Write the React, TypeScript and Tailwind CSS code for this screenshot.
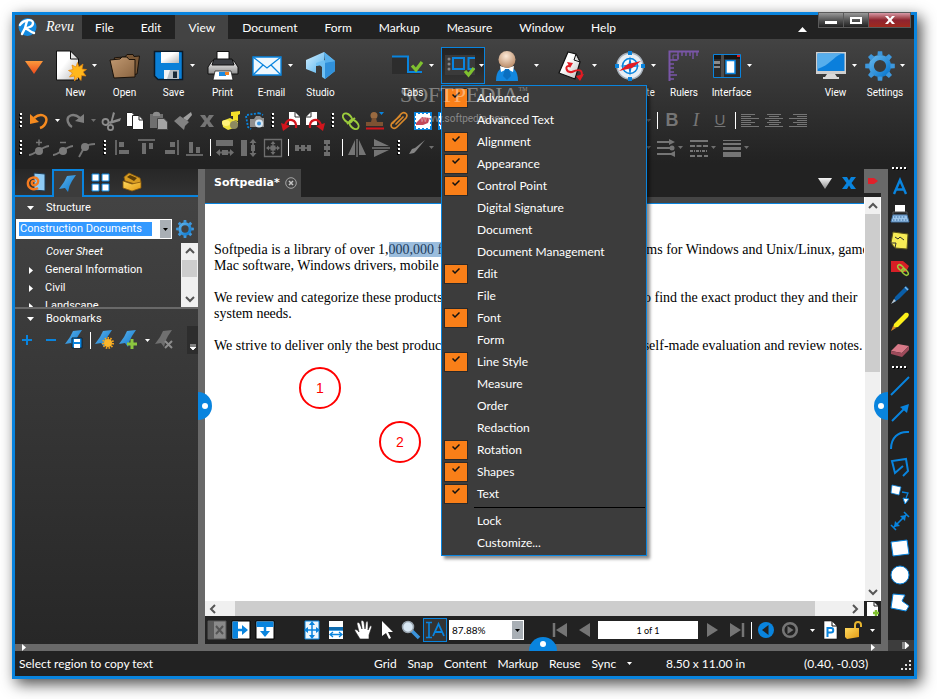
import React, { useState } from "react";
import clsx from "clsx";

interface SvgProps {
  w?: number;
  h?: number;
  className?: string;
  children: React.ReactNode;
}

const BLUE = "#0984de";
const GRAY = "#757575";

const Svg: React.FC<SvgProps> = ({ w = 20, h = 20, className, children }) => (
  <svg
    width={w}
    height={h}
    viewBox={`0 0 ${w} ${h}`}
    fill="none"
    aria-hidden="true"
    className={clsx("shrink-0", className)}
  >
    {children}
  </svg>
);

// Shared gradients, referenced by id from the icons below
const Defs = () => (
  <svg width="0" height="0" className="absolute" aria-hidden="true">
    <defs>
      <linearGradient id="gBlue" x1="0" y1="0" x2="1" y2="1">
        <stop offset="0" stopColor="#5fb2ea" />
        <stop offset="1" stopColor="#0a78cf" />
      </linearGradient>
      <linearGradient id="gSky" x1="0" y1="0" x2="1" y2="1">
        <stop offset="0" stopColor="#d3efff" />
        <stop offset="1" stopColor="#58b4ee" />
      </linearGradient>
      <linearGradient id="gOrange" x1="0" y1="0" x2="0" y2="1">
        <stop offset="0" stopColor="#fb9a3c" />
        <stop offset="1" stopColor="#ee4a1c" />
      </linearGradient>
      <linearGradient id="gWhite" x1="0" y1="0" x2="1" y2="1">
        <stop offset="0.4" stopColor="#ffffff" />
        <stop offset="1" stopColor="#b9b9b9" />
      </linearGradient>
      <linearGradient id="gSilver" x1="0" y1="0" x2="0" y2="1">
        <stop offset="0" stopColor="#f4f4f4" />
        <stop offset="1" stopColor="#8d8d8d" />
      </linearGradient>
      <linearGradient id="gGold" x1="0" y1="0" x2="1" y2="1">
        <stop offset="0" stopColor="#ffd95e" />
        <stop offset="1" stopColor="#e29a13" />
      </linearGradient>
      <radialGradient id="gSkin" cx="0.45" cy="0.3" r="0.7">
        <stop offset="0" stopColor="#fbe9d8" />
        <stop offset="1" stopColor="#b98a66" />
      </radialGradient>
      <linearGradient id="gTan" x1="0" y1="0" x2="1" y2="1">
        <stop offset="0" stopColor="#c29a72" />
        <stop offset="1" stopColor="#8a6440" />
      </linearGradient>
    </defs>
  </svg>
);

const Caret = ({ dim = false }: { dim?: boolean }) => (
  <svg width="5" height="3" viewBox="0 0 5 3" aria-hidden="true" className="shrink-0">
    <path d="M0 0H5L2.500 3Z" fill={dim ? "#6e6e6e" : "#fff"} />
  </svg>
);

const Gear = ({ size = 30 }: { size?: number }) => (
  <svg width={size} height={size} viewBox="0 0 30 30" fill="none" aria-hidden="true">
    <circle cx="15" cy="15" r="8.600" stroke="url(#gBlue)" strokeWidth="5" />
    {[0, 45, 90, 135, 180, 225, 270, 315].map((a) => (
      <path key={a} d="M12.400 4.600 12.800 0.200H17.200L17.600 4.600Z" fill="#3d97dc" transform={`rotate(${a} 15 15)`} />
    ))}
  </svg>
);

const Ribbon = ({ color = "url(#gBlue)" }: { color?: string }) => (
  <path d="M8 1 17 0 13 6 10.500 11 9 17 6 13 0 14 5 7Z" fill={color} />
);

/* ---- large ribbon icons ---- */

const NewIcon = () => (
  <Svg w={32} h={32}>
    <path d="M1.500 1H15.500L23.500 9V30H1.500Z" fill="url(#gWhite)" stroke="#111" />
    <path d="M15.500 1V9H23.500Z" fill="#e6e6e6" stroke="#111" />
    <path
      d="M22.500 12.500 24 17 28 14 27 19 31.500 19.500 28 22 31 26 26.500 25.500 26 30.500 23 27 19.500 31 19.500 26 14.500 27 17.500 23 13.500 20.500 18 19.500 17 15 21 17Z"
      fill="#ffb71b"
      stroke="#e8850c"
      strokeWidth="0.700"
    />
  </Svg>
);

const OpenIcon = () => (
  <Svg w={32} h={32}>
    <path d="M5 8 8 7.500 16 7 18 4.500H24L25 6.500 30.500 6 28 24 16 26Z" fill="#7a5837" stroke="#1a120a" />
    <path d="M1 10 11 9 13 7H18L20 9.500 26 9.500 26 27 5 28Z" fill="url(#gTan)" stroke="#1a120a" />
  </Svg>
);

const SaveIcon = () => (
  <Svg w={32} h={32}>
    <path d="M1.500 1.500H29.500V29.500H5L1.500 26Z" fill="#0a80d8" stroke="#0b1a28" strokeWidth="1.500" />
    <path d="M8 2H26V13H8Z" fill="url(#gWhite)" />
    <path d="M11 20H26V29H11Z" fill="#b9c0c6" />
    <path d="M20 21.500H24V28H20Z" fill="#1a2a38" />
    <path d="M11 20H17L14 29H11Z" fill="#f1f3f5" />
  </Svg>
);

const PrintIcon = () => (
  <Svg w={32} h={32}>
    <path d="M10 1.500H22V10H10Z" fill="#fff" stroke="#111" />
    <path d="M5 11H27L31 17V24H1V17Z" fill="url(#gSilver)" stroke="#111" />
    <path d="M7 9H25L27 15H5Z" fill="#3a3d42" stroke="#111" />
    <path d="M8 21H24L26 30H6Z" fill="#fff" stroke="#222" strokeWidth="0.800" />
    <path d="M12 22H19V26H12Z" fill="#1d8ae0" />
    <path d="M18 22H22V25H18Z" fill="#f58220" />
  </Svg>
);

const MailIcon = () => (
  <Svg w={32} h={32}>
    <path d="M2 7H30V25H2Z" fill="#eef7fd" stroke={BLUE} strokeWidth="1.400" />
    <path d="M2 7 16 18 30 7M2 25 12 15M30 25 20 15" stroke={BLUE} strokeWidth="1.300" />
  </Svg>
);

const StudioIcon = () => (
  <Svg w={32} h={32}>
    <path d="M1 10 19 2V13L11 16V23L1 19Z" fill="url(#gSky)" />
    <path d="M19 2 30 11V21L20 29 17 27V17L15 15.500 11 16V13L20 10Z" fill="#6fc0f2" />
    <path d="M20 12 30 11V21L20 29Z" fill="#3191db" />
    <path d="M19 2 30 11 20 13Z" fill="#58b0ec" />
  </Svg>
);

const TabsIcon = () => (
  <Svg w={32} h={32}>
    <path d="M0 7H16V22H28V24H0Z" fill="#2d2d2d" />
    <path d="M0 6.500H16V22H30" stroke={BLUE} strokeWidth="2" />
    <path d="M20 15.500 24 20 30 12" stroke="#7fc12f" strokeWidth="3.200" />
  </Svg>
);

const ToolbarsIcon = () => (
  <Svg w={32} h={32}>
    <path d="M1 5H31V25H1Z" fill="#3a3a3a" />
    <circle cx="5" cy="9" r="1.500" fill="#858585" />
    <circle cx="5" cy="14" r="1.500" fill="#858585" />
    <circle cx="5" cy="19" r="1.500" fill="#858585" />
    <path d="M9 8H20V19H9ZM31 8H24.500V19H31" stroke={BLUE} strokeWidth="2" />
    <path d="M21 21 24.500 25 30 18" stroke="#7fc12f" strokeWidth="3.200" />
  </Svg>
);

const PersonIcon = () => (
  <Svg w={26} h={32}>
    <path d="M2 31C2 20 7 17 13 17S24 20 24 31Z" fill="#1287df" />
    <path d="M6 16 13 18 20 16 19 22 13 19 7 22Z" fill="#fff" />
    <path d="M11 19H15L17 26 13 30 9 26Z" fill="#0a6fc0" />
    <circle cx="13" cy="9.500" r="8.500" fill="url(#gSkin)" />
  </Svg>
);

const DocArrowsIcon = () => (
  <Svg w={30} h={32}>
    <path d="M11 2 19 4 23 12 18 29 2 23Z" fill="url(#gWhite)" stroke="#111" strokeWidth="1.200" />
    <path d="M19 4 17 10 23 12Z" fill="#ddd" stroke="#111" />
    <path d="M13 16C7 15 9 23 15 22C21 19 27 19 24 27" stroke="#e31b23" strokeWidth="2" />
    <path d="M10 12 16 13 13 18ZM19 26 27 24 23 31Z" fill="#e31b23" />
  </Svg>
);

const CompassIcon = () => (
  <Svg w={32} h={32}>
    <circle cx="16" cy="16" r="13" fill="#e8eef4" stroke="#a8b2bc" strokeWidth="1.500" />
    <path d="M14 1H18V5H14ZM14 27H18V31H14ZM1 14H5V18H1ZM27 14H31V18H27Z" fill={BLUE} />
    <circle cx="16" cy="16" r="7.500" fill="#f4f7fa" stroke={BLUE} strokeWidth="1.600" />
    <path d="M16 6 17.500 14.500 26 16 17.500 17.500 16 26 14.500 17.500 6 16 14.500 14.500Z" fill={BLUE} />
    <path d="M5 21 14 14 27 11 18 18Z" fill="#e31b23" />
  </Svg>
);

const RulersIcon = () => (
  <Svg w={32} h={32}>
    <path d="M1.500 31V1.500H31" stroke="#7a56a8" strokeWidth="2" />
    <path
      d="M10 2V9M14 2V6M18 2V6M22 2V6M25 2V9M29 2V6M2 10H9M2 14H6M2 18H6M2 22H6M2 25H9M2 29H6"
      stroke="#7a56a8"
      strokeWidth="1.400"
    />
    <path d="M5 5H10V10H5Z" stroke="#7a56a8" />
  </Svg>
);

const InterfaceIcon = () => (
  <Svg w={30} h={32}>
    <path d="M1.500 4.500H28.500V27.500H1.500Z" fill="#2a2a2a" stroke={BLUE} />
    <path d="M2 5H28V9H2Z" fill="#151515" />
    <path d="M2 11H8V14H2ZM2 16H8V18H2Z" fill="#8b8b8b" />
    <path d="M9 5H12V27H9Z" fill="#4d4d4d" />
    <path d="M14 10.500H23V23.500H14Z" fill="#fff" stroke={BLUE} strokeWidth="1.500" />
    <path d="M25 5H28V7H25Z" fill="#e31b23" />
  </Svg>
);

const MonitorIcon = () => (
  <Svg w={32} h={32}>
    <path d="M1 2H31V24H1Z" fill="#cfcfcf" />
    <path d="M2.500 3.500H29.500V21H2.500Z" fill="#0b7fdc" />
    <path d="M2.500 3.500H27C18 7 15 15 2.500 19Z" fill="#57aeec" />
    <path d="M12 24H20L22 27H10ZM8 27H24V29H8Z" fill="#d9d9d9" />
  </Svg>
);

/* ---- small toolbar icons ---- */

const UndoIcon = () => (
  <Svg>
    <path d="M5 7C12 1 19 5 17 11C16 14 14 16 11 17" stroke="#f68b1f" strokeWidth="2.400" />
    <path d="M1 3V13L10 11Z" fill="#f68b1f" />
  </Svg>
);

const RedoIcon = () => (
  <Svg>
    <path d="M15 7C8 1 1 5 3 11C4 14 5 15 7 16" stroke="#7e7e7e" strokeWidth="2.400" />
    <path d="M19 3V12L10 10Z" fill="#7e7e7e" />
  </Svg>
);

const CutIcon = () => (
  <Svg>
    <path d="M12 1 14 2 11 12 9 13ZM20 7 19 10 9 13 7 11Z" fill="#8c8c8c" />
    <circle cx="4.500" cy="11" r="3" stroke="#8c8c8c" strokeWidth="1.800" />
    <circle cx="9.500" cy="16.500" r="2.600" stroke="#8c8c8c" strokeWidth="1.800" />
  </Svg>
);

const CopyIcon = () => (
  <Svg>
    <path d="M1.500 1.500H7L10.500 5V15.500H1.500Z" fill="#fff" stroke="#222" />
    <path d="M7.500 4.500H14L18.500 9V18.500H7.500Z" fill="#fff" stroke="#222" />
    <path d="M14 4.500V9H18.500" stroke="#222" />
  </Svg>
);

const PasteIcon = () => (
  <Svg>
    <path d="M1 3H14V17H1Z" fill="#6f6f6f" />
    <path d="M4 3C4 0 11 0 11 3V5H4Z" fill="#8c8c8c" />
    <path d="M8.500 7.500H15L18.500 11V18.500H8.500Z" fill="#a4a4a4" stroke="#444" />
  </Svg>
);

const PainterIcon = () => (
  <Svg>
    <path d="M18 1 19 4 14 10 10 7Z" fill="#a0a0a0" />
    <path d="M7 5 16 11 12 15 11 19 1 10Z" fill="#828282" />
  </Svg>
);

const XIcon = ({ color = GRAY }: { color?: string }) => (
  <Svg w={18} h={18}>
    <path d="M2 3H7L9 6.500 11 3H16L11.500 9 16 15H11L9 11.500 7 15H2L6.500 9Z" fill={color} />
  </Svg>
);

const HornIcon = () => (
  <Svg>
    <path d="M10 1 19 0 19 3 17 4 17 10 12 9 12 5 10 5Z" fill="#f4e02a" />
    <path d="M1 10 9 7 17 11 16 16 7 19 2 16Z" fill="#ece13c" />
    <ellipse cx="13" cy="14" rx="4" ry="4" fill="#8d8a60" />
    <ellipse cx="5" cy="12" rx="4" ry="3" fill="#fff37a" />
  </Svg>
);

const CameraIcon = () => (
  <Svg>
    <path d="M2 4 14 2M1 5 3 16 6 18M14 2 18 4" stroke={BLUE} strokeWidth="1.800" strokeDasharray="2 1.500" />
    <path d="M5 8H9L11 5H15L17 7H19V16H5Z" fill="#8f8f8f" />
    <circle cx="14" cy="12.500" r="4" fill="#d9e7f2" />
    <circle cx="14" cy="12.500" r="2" fill="#3b93db" />
  </Svg>
);

const RotateIcon = ({ flip = false }: { flip?: boolean }) => (
  <Svg className={flip ? "-scale-x-100" : ""}>
    <path d="M8 1H14L19 6V14H8Z" fill="#fff" />
    <path d="M14 1V6H19" stroke="#333" />
    <path d="M15 17C16 8 7 6 4 14" stroke="#d2151d" strokeWidth="2.200" />
    <path d="M0 12 9 15 2 20Z" fill="#d2151d" />
  </Svg>
);

const LinkIcon = () => (
  <Svg>
    <ellipse cx="6.500" cy="7" rx="5.500" ry="3.500" transform="rotate(45 6.500 7)" stroke="#9ccc3c" strokeWidth="2" />
    <ellipse cx="13" cy="13.500" rx="5.500" ry="3.500" transform="rotate(45 13 13.500)" stroke="#9ccc3c" strokeWidth="2" />
    <path d="M6 13 14 7" stroke="#9ccc3c" strokeWidth="2" />
  </Svg>
);

const StampIcon = () => (
  <Svg>
    <circle cx="9" cy="4.500" r="3.500" fill="#9a6a40" />
    <path d="M7 7H11L12 11H18V15H1V11H6Z" fill="#7d5232" />
    <path d="M1 17.500H19" stroke="#d2151d" strokeWidth="2" />
    <path d="M14 1H19L16.500 4Z" fill={BLUE} />
  </Svg>
);

const ClipIcon = () => (
  <Svg>
    <path
      d="M4 12 12 3C15 0 20 3 17 7L8 16C5 19 0 16 3 12L11 5M7 13 14 6"
      stroke="#d9892b"
      strokeWidth="1.700"
      strokeLinecap="round"
    />
  </Svg>
);

const EraseImageIcon = () => (
  <Svg>
    <path d="M1 1H19V19H1Z" fill={BLUE} />
    <path d="M3 3H17V17H3Z" fill="#fff" stroke="#fff" strokeWidth="2" strokeDasharray="2 2" />
    <path d="M3 12 9 6 17 7 15 12 10 14 3 14Z" fill="#c4485a" />
  </Svg>
);

const TextAlignIcon = ({ align }: { align: "left" | "center" | "right" }) => (
  <Svg w={18} h={16}>
    {[0, 1, 2, 3, 4, 5, 6].map((i) => {
      const len = i % 2 ? 10 : i % 4 ? 18 : 14;
      const x = align === "left" ? 0 : align === "right" ? 18 - len : (18 - len) / 2;
      return <path key={i} d={`M${x} ${i * 2 + 1.5}h${len}`} stroke={GRAY} />;
    })}
  </Svg>
);

const PointIcon = ({ sign }: { sign?: "+" | "-" }) => (
  <Svg>
    <path d={sign ? "M0 17C5 17 12 9 20 8" : "M2 19C6 13 6 6 18 6"} stroke={GRAY} strokeWidth="2" />
    <circle cx={sign ? 10 : 8} cy={sign ? 13 : 9} r="4" fill="#7b7b7b" />
    {sign && <path d={sign === "+" ? "M7 4.500H13M10 1.500V7.500" : "M7 4.500H13"} stroke={GRAY} strokeWidth="1.500" />}
  </Svg>
);

const AlignIcon = ({ d, line }: { d: string; line: string }) => (
  <Svg>
    <path d={line} stroke="#646464" strokeWidth="2" />
    <path d={d} fill="#6e6e6e" />
  </Svg>
);

const Grip = () => (
  <div className="flex w-3 shrink-0 justify-center">
    <Svg w={4} h={16}>
      {[1, 5, 9, 13].map((y) => (
        <g key={y}>
          <path d={`M0 ${y}h2v2h-2z`} fill="#000" />
          <path d={`M1 ${y - 1}h2v2h-2z`} fill="#fff" />
        </g>
      ))}
    </Svg>
  </div>
);

const HGrip = () => (
  <Svg w={16} h={5}>
    {[1, 5, 9, 13].map((x) => (
      <g key={x}>
        <path d={`M${x} 2h2v2h-2z`} fill="#000" />
        <path d={`M${x - 1} 1h2v2h-2z`} fill="#fff" />
      </g>
    ))}
  </Svg>
);

const Sep = () => (
  <div className="flex w-[6px] shrink-0 justify-center">
    <div className="h-[17px] w-px bg-white" />
  </div>
);

interface SlotProps {
  label: string;
  className?: string;
  children: React.ReactNode;
}

const Slot: React.FC<SlotProps> = ({ label, className, children }) => (
  <button
    type="button"
    aria-label={label}
    className={clsx("flex h-6 w-6 shrink-0 items-center justify-center", className)}
  >
    {children}
  </button>
);

const CaretSlot = ({ dim = false, className = "w-3 justify-center" }: { dim?: boolean; className?: string }) => (
  <div className={clsx("flex shrink-0 items-center", className)}>
    <Caret dim={dim} />
  </div>
);

/* ---- menu bar ---- */

const MENUS = ["File", "Edit", "View", "Document", "Form", "Markup", "Measure", "Window", "Help"];

const MenuBar = () => (
  <div className="relative flex h-6 shrink-0 bg-[#222]">
    <div className="flex w-[67px] shrink-0 items-center gap-[9px] bg-[#434343] pl-[3px]">
      <Svg w={19} h={20}>
        <circle cx="9.500" cy="10" r="9" fill="#128be2" />
        <path
          d="M2 8C5 3 15 1 15 6C15 10 9 11 7 11C10 12 12 15 16 16M9 4C8 9 6 14 4 17"
          stroke="#fff"
          strokeWidth="2.400"
          strokeLinecap="round"
        />
      </Svg>
      <span className="font-['Liberation_Serif',serif] text-[14px] leading-6 text-white italic">Revu</span>
    </div>
    <nav className="flex gap-px">
      {MENUS.map((m) => (
        <button
          key={m}
          type="button"
          className={clsx("px-[13px] pt-px text-[12px] leading-6 text-white", m === "View" && "bg-[#434343]")}
        >
          {m}
        </button>
      ))}
    </nav>
    <div className="flex-1" />
    <button type="button" aria-label="Collapse ribbon" className="mr-[107px] flex items-center pt-1">
      <Svg w={9} h={5}>
        <path d="M0 5 4.500 0 9 5Z" fill="#fff" />
      </Svg>
    </button>
    <div className="absolute -top-[3px] right-[3px] flex h-4 border border-[#5a5a5a]">
      <button
        type="button"
        aria-label="Minimize"
        className="flex w-[25px] items-end justify-center border-r border-[#5a5a5a] bg-linear-to-b from-[#9a9a9a] via-[#555] via-50% to-[#222] pb-[3px]"
      >
        <span className="h-[3px] w-3 bg-white" />
      </button>
      <button
        type="button"
        aria-label="Maximize"
        className="flex w-[25px] items-center justify-center border-r border-[#5a5a5a] bg-linear-to-b from-[#9a9a9a] via-[#555] via-50% to-[#222]"
      >
        <span className="h-[7px] w-3 border-2 border-white" />
      </button>
      <button
        type="button"
        aria-label="Close"
        className="flex w-[41px] items-center justify-center bg-linear-to-b from-[#d79aa8] via-[#8e2430] via-50% to-[#a02a1c]"
      >
        <Svg w={12} h={10}>
          <path d="M1 1H4L6 3.500 8 1H11L7.500 5 11 9H8L6 6.500 4 9H1L4.500 5Z" fill="#fff" />
        </Svg>
      </button>
    </div>
  </div>
);

/* ---- toolbars drop-down ---- */

interface MenuEntry {
  label: string;
  checked?: boolean;
}

const TOOLBARS: MenuEntry[] = [
  { label: "Advanced", checked: true },
  { label: "Advanced Text" },
  { label: "Alignment", checked: true },
  { label: "Appearance", checked: true },
  { label: "Control Point", checked: true },
  { label: "Digital Signature" },
  { label: "Document" },
  { label: "Document Management" },
  { label: "Edit", checked: true },
  { label: "File" },
  { label: "Font", checked: true },
  { label: "Form" },
  { label: "Line Style", checked: true },
  { label: "Measure" },
  { label: "Order" },
  { label: "Redaction" },
  { label: "Rotation", checked: true },
  { label: "Shapes", checked: true },
  { label: "Text", checked: true },
];

const ToolbarsMenu = () => {
  const [items, setItems] = useState<MenuEntry[]>(TOOLBARS);

  const toggle = (label: string) => {
    setItems((prev) => prev.map((i) => (i.label === label ? { ...i, checked: !i.checked } : i)));
  };

  return (
    <div
      role="menu"
      className="absolute top-[38px] left-0 z-20 w-[206px] border border-[#0984de] bg-[#3c3c3c] px-px py-px font-['Lato','Open_Sans',sans-serif] text-[12px] text-white shadow-[3px_3px_3px_rgba(0,0,0,0.45)]"
    >
      {items.map((item) => (
        <button
          key={item.label}
          type="button"
          role="menuitemcheckbox"
          aria-checked={!!item.checked}
          onClick={() => toggle(item.label)}
          className="flex h-[22px] w-full items-center gap-[9px] pl-px text-left"
        >
          <span
            className={clsx(
              "flex h-5 w-6 shrink-0 justify-center border pt-[2px]",
              item.checked ? "border-[#2a2a2a] bg-[#f97f18]" : "border-transparent"
            )}
          >
            {item.checked && (
              <Svg w={8} h={8}>
                <path d="M0.500 3.500 3 6 7.500 1.500" stroke="#111" strokeWidth="1.500" />
              </Svg>
            )}
          </span>
          {item.label}
        </button>
      ))}
      <div className="my-[2px] ml-[31px] h-px bg-black" />
      {["Lock", "Customize..."].map((label) => (
        <button key={label} type="button" role="menuitem" className="flex h-[22px] w-full items-center pl-[34px]">
          {label}
        </button>
      ))}
    </div>
  );
};

const Watermark = () => (
  <div className="pointer-events-none absolute top-[36px] -left-[41px] z-30 text-white/40">
    <div className="flex font-['Liberation_Serif',serif] text-[22px] leading-6">
      SOFTPEDIA<span className="text-[6px] leading-3">TM</span>
    </div>
    <div className="pl-5 text-[10px] leading-6">www.softpedia.com</div>
  </div>
);

/* ---- ribbon ---- */

interface RibbonItemProps {
  label: string;
  icon: React.ReactNode;
  caret?: boolean;
  width?: string;
}

const RibbonItem: React.FC<RibbonItemProps> = ({ label, icon, caret, width = "w-[49px]" }) => (
  <button type="button" className={clsx("flex shrink-0 flex-col items-center", width)}>
    <span className="flex h-[37px] items-center gap-[5px]">
      {icon}
      {caret && <Caret />}
    </span>
    <span className="text-[10px] leading-[18px] text-white">{label}</span>
  </button>
);

const RibbonRow = () => (
  <div className="flex h-[68px] pt-2 pr-1 pl-px">
    <button type="button" aria-label="Profile menu" className="flex h-[41px] w-[35px] shrink-0 items-center justify-center">
      <Svg w={18} h={13}>
        <path d="M0 0H18L9 13Z" fill="url(#gOrange)" />
      </Svg>
    </button>
    <RibbonItem label="New" icon={<NewIcon />} caret />
    <RibbonItem label="Open" icon={<OpenIcon />} />
    <RibbonItem label="Save" icon={<SaveIcon />} caret />
    <RibbonItem label="Print" icon={<PrintIcon />} />
    <RibbonItem label="E-mail" icon={<MailIcon />} caret />
    <RibbonItem label="Studio" icon={<StudioIcon />} />
    <div className="w-[43px] shrink-0" />
    <RibbonItem label="Tabs" icon={<TabsIcon />} caret />
    <div className="relative w-[52px] shrink-0 px-1">
      <button
        type="button"
        aria-label="Toolbars"
        aria-haspopup="menu"
        className="flex h-[37px] w-full items-center gap-[3px] border border-[#0984de] bg-linear-to-b from-[#222] to-[#333] pl-[2px]"
      >
        <ToolbarsIcon />
        <Caret />
      </button>
      <div className="relative -mt-[37px]">
        <ToolbarsMenu />
        <Watermark />
      </div>
    </div>
    <RibbonItem label="Profiles" icon={<><PersonIcon /><span className="w-1" /></>} caret width="w-[55px]" />
    <RibbonItem label="Links" icon={<DocArrowsIcon />} caret width="w-[66px]" />
    <RibbonItem label="Navigate" icon={<CompassIcon />} caret width="w-[50px]" />
    <RibbonItem label="Rulers" icon={<RulersIcon />} width="w-[48px]" />
    <RibbonItem label="Interface" icon={<InterfaceIcon />} caret width="w-[47px]" />
    <div className="flex-1" />
    <RibbonItem label="View" icon={<MonitorIcon />} caret />
    <RibbonItem label="Settings" icon={<Gear />} caret width="w-[50px]" />
  </div>
);

const EditRow = () => (
  <div className="flex h-[27px] items-center">
    <Grip />
    <Slot label="Undo"><UndoIcon /></Slot>
    <CaretSlot />
    <Slot label="Redo"><RedoIcon /></Slot>
    <CaretSlot dim />
    <Slot label="Cut"><CutIcon /></Slot>
    <Slot label="Copy"><CopyIcon /></Slot>
    <Slot label="Paste"><PasteIcon /></Slot>
    <Slot label="Format painter"><PainterIcon /></Slot>
    <Slot label="Delete"><XIcon /></Slot>
    <Slot label="Flatten"><HornIcon /></Slot>
    <Slot label="Snapshot"><CameraIcon /></Slot>
    <Grip />
    <Slot label="Rotate left"><RotateIcon /></Slot>
    <Slot label="Rotate right"><RotateIcon flip /></Slot>
    <Grip />
    <Slot label="Hyperlink"><LinkIcon /></Slot>
    <Slot label="Stamp"><StampIcon /></Slot>
    <Slot label="Attach"><ClipIcon /></Slot>
    <Slot label="Erase content"><EraseImageIcon /></Slot>
    <Slot label="Cut content"><EraseImageIcon /></Slot>
    <div className="w-[183px] shrink-0" />
    <CaretSlot dim />
    <Sep />
    <Slot label="Bold" className="font-['Liberation_Sans',sans-serif] text-[18px] font-bold text-[#757575]">B</Slot>
    <Slot label="Italic" className="font-['Liberation_Serif',serif] text-[19px] text-[#757575] italic">I</Slot>
    <Slot label="Underline" className="font-['Liberation_Sans',sans-serif] text-[15px] text-[#757575] underline">U</Slot>
    <Sep />
    <Slot label="Align left"><TextAlignIcon align="left" /></Slot>
    <Slot label="Align center"><TextAlignIcon align="center" /></Slot>
    <Slot label="Align right"><TextAlignIcon align="right" /></Slot>
  </div>
);

const AlignRow = () => (
  <div className="flex h-[27px] items-center">
    <Grip />
    <Slot label="Add control point"><PointIcon sign="+" /></Slot>
    <Slot label="Subtract control point"><PointIcon sign="-" /></Slot>
    <Slot label="Convert to arc"><PointIcon /></Slot>
    <Grip />
    <Slot label="Align objects left"><AlignIcon line="M3 2V17" d="M6 4H11V9H6ZM6 12H16V16H6Z" /></Slot>
    <Slot label="Align objects top"><AlignIcon line="M1 2H18" d="M5 5H9V16H5ZM12 5H16V11H12Z" /></Slot>
    <Slot label="Align objects right"><AlignIcon line="M17 2V17" d="M9 4H14V9H9ZM4 12H14V16H4Z" /></Slot>
    <Slot label="Align objects bottom"><AlignIcon line="M1 17H18" d="M4 4H8V15H4ZM11 9H15V15H11Z" /></Slot>
    <Sep />
    <Slot label="Same width"><AlignIcon line="M5 14.500H15" d="M1 2H18V8H1ZM1 14.500 5 11V18ZM19 14.500 15 11V18ZM7 12H13V17H7Z" /></Slot>
    <Slot label="Same height"><AlignIcon line="M14 5V15" d="M2 2H8V18H2ZM14 1 17.500 5H10.500ZM14 19 17.500 15H10.500ZM12 7H16V13H12Z" /></Slot>
    <Slot label="Same size">
      <Svg>
        <path d="M1.500 1.500H18.500V18.500H1.500ZM10 4V16M4 10H16" stroke="#6e6e6e" strokeWidth="1.300" />
        <path d="M10 3 12.500 6H7.500ZM10 17 12.500 14H7.500ZM3 10 6 7.500V12.500ZM17 10 14 7.500V12.500ZM7.500 7.500H12.500V12.500H7.500Z" fill="#6e6e6e" />
      </Svg>
    </Slot>
    <Sep />
    <Slot label="Distribute horizontally"><AlignIcon line="M2 10H18" d="M2 7H6V13H2ZM8 7H12V13H8ZM14 7H18V13H14Z" /></Slot>
    <Slot label="Distribute vertically"><AlignIcon line="M10 2V18" d="M7 2H13V6H7ZM7 8H13V12H7ZM7 14H13V18H7Z" /></Slot>
    <Sep />
    <Slot label="Flip horizontal">
      <Svg>
        <path d="M8 2V17H1ZM12 2V17H19Z" fill={GRAY} />
        <path d="M10 1V19" stroke="#999" />
      </Svg>
    </Slot>
    <Slot label="Flip vertical">
      <Svg>
        <path d="M3 1 18 8H3ZM3 19 18 12H3Z" fill={GRAY} />
        <path d="M1 10H19" stroke="#999" />
      </Svg>
    </Slot>
    <Grip />
    <Slot label="Brush">
      <Svg>
        <path d="M2 16 5 11 8 10 18 2 9 13 7 15Z" fill="#858585" />
      </Svg>
    </Slot>
    <CaretSlot dim className="w-[9px] justify-start" />
    <div className="w-[204px] shrink-0" />
    <CaretSlot dim />
    <Slot label="Line ends">
      <Svg>
        <path d="M1 4H15M1 10H15M1 16H15" stroke={GRAY} strokeWidth="2" />
        <path d="M13 1 19 4 13 7ZM19 19 13 16 19 13" fill={GRAY} />
        <circle cx="16" cy="10" r="2.500" fill={GRAY} />
      </Svg>
    </Slot>
    <CaretSlot dim className="w-[9px] justify-start" />
    <Slot label="Line style">
      <Svg>
        <path d="M1 3H19" stroke={GRAY} strokeWidth="2" />
        <path d="M1 8H19" stroke={GRAY} strokeWidth="2" strokeDasharray="5 1.500" />
        <path d="M1 13H19" stroke={GRAY} strokeWidth="2" strokeDasharray="3 1 1 1" />
        <path d="M1 18H19" stroke={GRAY} strokeWidth="2" strokeDasharray="5 2" />
      </Svg>
    </Slot>
    <CaretSlot dim className="w-[9px] justify-start" />
    <Slot label="Line width">
      <Svg>
        <path d="M1 2H19V3H1ZM1 5H19V7H1ZM1 9H19V12H1ZM1 14H19V19H1Z" fill={GRAY} />
      </Svg>
    </Slot>
    <CaretSlot dim className="w-[9px] justify-start" />
  </div>
);

/* ---- left panel ---- */

const PanelHeader = ({ title }: { title: string }) => (
  <button type="button" className="flex h-5 w-full shrink-0 items-center gap-3 pl-3 text-[11px] text-white">
    <Svg w={7} h={4}>
      <path d="M0 0H7L3.500 4Z" fill="#fff" />
    </Svg>
    {title}
  </button>
);

const Chevron = ({ d }: { d: string }) => (
  <Svg w={10} h={10}>
    <path d={d} stroke="#555" strokeWidth="2" />
  </Svg>
);

const UP = "M1 7 5 3 9 7";
const DOWN = "M1 3 5 7 9 3";
const LEFT = "M7 1 3 5 7 9";
const RIGHT = "M3 1 7 5 3 9";

const LeftPanel = () => (
  <aside className="flex w-[183px] shrink-0 flex-col bg-linear-to-b from-[#454545] to-[#272727]">
    <div className="mb-px flex h-7 shrink-0 bg-linear-to-b from-[#272727] to-[#333]">
      <div className="flex w-[37px] items-center justify-center border-b-2 border-[#0984de] pl-1">
        <Svg>
          <path d="M8 1 19 2V19L8 18Z" fill="#8ecbf5" stroke="#1d3b55" />
          <path
            d="M9 10C8 8 5 9 6 12C8 15 13 12 12 8C10 4 3 5 2 10C1 16 7 19 12 16"
            stroke="#f47b20"
            strokeWidth="2.400"
          />
        </Svg>
      </div>
      <div className="flex w-8 items-center justify-center border-2 border-b-0 border-[#0984de] bg-[#3c3c3c]">
        <Svg w={18} h={18}><Ribbon /></Svg>
      </div>
      <div className="flex flex-1 items-center gap-3 border-b-2 border-[#0984de] pl-[6px]">
        <Svg>
          <path d="M2 2H9V9H2ZM12 2H19V9H12ZM2 12H9V19H2ZM12 12H19V19H12Z" fill="#fff" stroke={BLUE} />
        </Svg>
        <Svg>
          <path d="M2 5 7 1 18 6 19 10 13 12 3 9Z" fill="#d79c22" stroke="#8a5a0c" strokeWidth="0.800" />
          <path d="M5 5 8 3 15 6 12 9Z" fill="#5a3c08" />
          <path d="M1 9 10 12 19 10 19 16 10 19 1 16Z" fill="url(#gGold)" stroke="#8a5a0c" strokeWidth="0.800" />
        </Svg>
      </div>
    </div>
    <PanelHeader title="Structure" />
    <div className="flex items-center gap-1 pt-px pl-px">
      <button
        type="button"
        aria-haspopup="listbox"
        className="flex h-5 w-[156px] items-center justify-between border border-white bg-white pl-[2px]"
      >
        <span className="w-[133px] bg-[#3399ff] pl-px text-left text-[11px] leading-[14px] text-white">
          Construction Documents
        </span>
        <span className="flex h-full w-[11px] items-center justify-center bg-[#a9afb5]">
          <Svg w={5} h={3}>
            <path d="M0 0H5L2.500 3Z" fill="#000" />
          </Svg>
        </span>
      </button>
      <button type="button" aria-label="Structure settings">
        <Gear size={18} />
      </button>
    </div>
    <div className="flex h-[70px] shrink-0 overflow-hidden border-b-2 border-[#696969] pt-1">
      <ul className="flex-1 text-[11px] leading-[18px] text-white">
        <li className="pl-[31px] italic">Cover Sheet</li>
        {["General Information", "Civil", "Landscape"].map((t) => (
          <li key={t} className="flex items-center gap-3 pl-[14px]">
            <Svg w={4} h={7}>
              <path d="M0 0 4 3.500 0 7Z" fill="#fff" />
            </Svg>
            {t}
          </li>
        ))}
      </ul>
      <div className="flex w-[17px] flex-col items-center justify-between bg-[#f0f0f0] py-[3px]">
        <Chevron d={UP} />
        <div className="mt-1 h-[17px] w-[15px] bg-[#cdcdcd]" />
        <div className="flex-1" />
        <Chevron d={DOWN} />
      </div>
    </div>
    <PanelHeader title="Bookmarks" />
    <div className="flex h-[22px] items-center">
      <Slot label="Add">
        <Svg w={10} h={10}><path d="M5 0V10M0 5H10" stroke={BLUE} strokeWidth="2" /></Svg>
      </Slot>
      <Slot label="Remove">
        <Svg w={10} h={10}><path d="M0 5H10" stroke={BLUE} strokeWidth="2" /></Svg>
      </Slot>
      <Slot label="Save bookmarks">
        <Svg>
          <Ribbon />
          <path d="M7 8H17V18H7Z" fill={BLUE} stroke="#123" />
          <path d="M9 9H15V12H9ZM9 14H15V18H9Z" fill="#fff" />
        </Svg>
      </Slot>
      <Sep />
      <Slot label="New bookmark">
        <Svg>
          <Ribbon />
          <circle cx="13" cy="13" r="5" stroke="#f7a51b" strokeWidth="2" strokeDasharray="1.500 1.300" />
          <circle cx="13" cy="13" r="4" fill="#fbb62a" />
        </Svg>
      </Slot>
      <Slot label="Add child bookmark">
        <Svg>
          <Ribbon />
          <path d="M13 9V19M8 14H18" stroke="#8cc63f" strokeWidth="3" />
        </Svg>
      </Slot>
      <CaretSlot />
      <Slot label="Delete bookmark">
        <Svg>
          <Ribbon color="#6f6f6f" />
          <path d="M10 11 17 18M17 11 10 18" stroke="#8d8d8d" strokeWidth="2" />
        </Svg>
      </Slot>
      <div className="flex-1" />
      <div className="flex h-7 w-[11px] items-end justify-center bg-[#2d2d2d] pb-1">
        <Svg w={6} h={6}>
          <path d="M0 1H6M0 3H6L3 6Z" fill="#fff" stroke="#fff" strokeWidth="0.800" />
        </Svg>
      </div>
    </div>
  </aside>
);

/* ---- document ---- */

const Pin = ({ n, className }: { n: number; className: string }) => (
  <div
    className={clsx(
      "absolute flex h-[42px] w-[42px] items-center justify-center rounded-full border-2 border-[#f00] font-['Liberation_Sans',sans-serif] text-[14px] text-[#f00]",
      className
    )}
  >
    {n}
  </div>
);

const Page = () => (
  <div className="relative min-h-0 flex-1 overflow-hidden bg-white pt-[38px] pl-[9px] font-['Liberation_Serif',serif] text-[14px] leading-4 whitespace-nowrap text-black">
    <p className="mb-4">
      Softpedia is a library of over 1,<span className="bg-[#9bbddd] text-[#1e3c5c]">000,000 free and</span>{" "}
      free-to-try&nbsp;&nbsp;&nbsp; software programs for Windows and Unix/Linux, games,
      <br />
      Mac software, Windows drivers, mobile devices and IT-related articles.
    </p>
    <p className="mb-4">
      We review and categorize these products in order to allow&nbsp;&nbsp;&nbsp; the visitor/user to find the exact
      product they and their
      <br />
      system needs.
    </p>
    <p>
      We strive to deliver only the best products to the visitor/user&nbsp;&nbsp;&nbsp; together with self-made
      evaluation and review notes.
    </p>
    <Pin n={1} className="top-[163px] left-[94px]" />
    <Pin n={2} className="top-[217px] left-[174px]" />
  </div>
);

const NavBar = () => (
  <div className="flex h-7 shrink-0 items-center bg-[#222]">
    <Slot label="Close split">
      <Svg>
        <path d="M1 1H19V19H1Z" fill="#8a8a8a" stroke="#555" />
        <path d="M1 1H7V19H1Z" fill="#5b5b5b" />
        <path d="M9 6 16 14M16 6 9 14" stroke="#555" strokeWidth="2" />
      </Svg>
    </Slot>
    <Slot label="Split vertical">
      <Svg>
        <path d="M1 1H19V19H1Z" fill="#fff" stroke="#000" />
        <path d="M1.500 1.500H7V18.500H1.500Z" fill={BLUE} />
        <path d="M6 10H13" stroke={BLUE} strokeWidth="2.500" />
        <path d="M11 5 17 10 11 15Z" fill={BLUE} />
      </Svg>
    </Slot>
    <Slot label="Split horizontal">
      <Svg>
        <path d="M1 1H19V19H1Z" fill="#fff" stroke="#000" />
        <path d="M1.500 1.500H18.500V7H1.500Z" fill={BLUE} />
        <path d="M10 6V12" stroke={BLUE} strokeWidth="2.500" />
        <path d="M5 11 10 17 15 11Z" fill={BLUE} />
      </Svg>
    </Slot>
    <div className="w-[23px] shrink-0" />
    <Slot label="Fit page">
      <Svg>
        <path d="M3 1H17V19H3Z" fill="#eef7fd" stroke={BLUE} />
        <path d="M10 3V17M4 10H16" stroke={BLUE} strokeWidth="1.500" />
        <path d="M10 1 13 5H7ZM10 19 13 15H7ZM2 10 6 7V13ZM18 10 14 7V13Z" fill={BLUE} />
      </Svg>
    </Slot>
    <Slot label="Fit width">
      <Svg>
        <path d="M3 1H17V7H3ZM3 10H17V19H3Z" fill="#fff" />
        <path d="M3 8H17M3 10H17" stroke={BLUE} strokeWidth="1.500" />
        <path d="M5 14.500H15M7 12 4 14.500 7 17M13 12 16 14.500 13 17" stroke={BLUE} strokeWidth="1.300" />
      </Svg>
    </Slot>
    <div className="w-[3px] shrink-0" />
    <Slot label="Pan">
      <Svg>
        <path
          d="M7 19 2 11C1 9 4 9 6 12L4 4C4 2 6 2 7 4L9 9 8 2C8 0 10 0 11 2L12 9 13 2C14 1 15 1 15 3L15 10 17 6C19 5 19 7 18 9L16 15V19Z"
          fill="#fff"
          stroke="#222"
          strokeWidth="0.600"
        />
      </Svg>
    </Slot>
    <Slot label="Select">
      <Svg>
        <path d="M5 1V16L9 13 12 19 14 18 11 12H16Z" fill="#fff" />
      </Svg>
    </Slot>
    <Slot label="Zoom">
      <Svg>
        <path d="M11 11 18 18" stroke="#3b93db" strokeWidth="3.500" />
        <circle cx="7" cy="7" r="5.500" fill="#d9e8f4" stroke="#98a4ae" strokeWidth="1.500" />
      </Svg>
    </Slot>
    <Slot label="Select text" className="border border-[#0984de] bg-[#333]">
      <Svg>
        <path d="M1 2.500H7M1 17.500H7M4 3V17" stroke={BLUE} strokeWidth="1.600" />
        <path d="M8 16 13.500 4 19 16M10 12H17" stroke={BLUE} strokeWidth="1.800" />
      </Svg>
    </Slot>
    <div className="ml-[2px] flex h-5 w-[75px] shrink-0 bg-white">
      <input
        aria-label="Zoom level"
        defaultValue="87.88%"
        className="w-16 min-w-0 bg-white pl-[3px] font-['Lato','Open_Sans',sans-serif] text-[10px] text-black"
      />
      <button type="button" aria-label="Zoom presets" className="my-px mr-px flex w-[11px] items-center justify-center bg-[#a9afb5]">
        <Svg w={5} h={3}>
          <path d="M0 0H5L2.500 3Z" fill="#000" />
        </Svg>
      </button>
    </div>
    <div className="w-6 shrink-0" />
    <Slot label="First page">
      <Svg>
        <path d="M4 3V17" stroke={GRAY} strokeWidth="2.500" />
        <path d="M17 3V17L6 10Z" fill={GRAY} />
      </Svg>
    </Slot>
    <Slot label="Previous page">
      <Svg><path d="M16 3V17L5 10Z" fill={GRAY} /></Svg>
    </Slot>
    <input
      aria-label="Page"
      defaultValue="1 of 1"
      className="mx-[2px] h-[18px] w-[100px] shrink-0 bg-white text-center font-['Lato','Open_Sans',sans-serif] text-[9px] text-black"
    />
    <Slot label="Next page">
      <Svg><path d="M5 3V17L16 10Z" fill={GRAY} /></Svg>
    </Slot>
    <Slot label="Last page">
      <Svg>
        <path d="M17 3V17" stroke={GRAY} strokeWidth="2.500" />
        <path d="M4 3V17L15 10Z" fill={GRAY} />
      </Svg>
    </Slot>
    <Sep />
    <Slot label="Previous view">
      <Svg w={18} h={18}>
        <circle cx="9" cy="9" r="8" fill={BLUE} />
        <path d="M11.500 4V14L5 9Z" fill="#222" />
      </Svg>
    </Slot>
    <Slot label="Next view">
      <Svg w={18} h={18}>
        <circle cx="9" cy="9" r="6.800" stroke={GRAY} strokeWidth="2.600" />
        <path d="M6.500 5V13L12.500 9Z" fill={GRAY} />
      </Svg>
    </Slot>
    <div className="flex-1" />
    <CaretSlot />
    <Slot label="Page properties">
      <Svg>
        <path d="M4 1H12L17 6V19H4Z" fill="#fff" stroke="#111" strokeWidth="0.600" />
        <path d="M12 1V6H17" stroke="#111" />
        <path d="M7.500 17V8H11C14 8 14 12.500 11 12.500H8" stroke={BLUE} strokeWidth="2" />
      </Svg>
    </Slot>
    <Slot label="Security">
      <Svg>
        <path d="M11 9V5C11 1 17 1 17 5V7" stroke="#e7b52f" strokeWidth="2" />
        <path d="M1 8H15V17L3 19 1 17Z" fill="url(#gGold)" />
      </Svg>
    </Slot>
    <CaretSlot className="w-[15px] pl-1" />
  </div>
);

const Handle = ({ className, dot }: { className: string; dot: string }) => (
  <button type="button" aria-label="Toggle panel" className={clsx("absolute z-10 bg-[#0984de]", className)}>
    <span className={clsx("absolute h-[6px] w-[6px] rounded-full bg-white", dot)} />
  </button>
);

const Center = () => (
  <section className="flex min-w-0 flex-1 flex-col">
    <div className="flex min-h-0 flex-1">
      <div className="flex min-w-0 flex-1 flex-col">
        <div className="flex h-7 shrink-0 items-center bg-[#222]">
          <div className="flex h-full w-24 items-center gap-[5px] bg-[#454545] pl-[9px] font-['DejaVu_Sans',sans-serif] text-[11px] font-bold text-white">
            Softpedia*
            <Svg w={12} h={12}>
              <circle cx="6" cy="6" r="5.300" stroke="#a5a5a5" />
              <path d="M4 4 8 8M8 4 4 8" stroke="#c4c4c4" strokeWidth="1.500" />
            </Svg>
          </div>
          <div className="flex-1" />
          <div className="flex items-center gap-2 pr-[6px]">
            <Svg w={14} h={11}>
              <path d="M0 0H14L7 11Z" fill="url(#gSilver)" />
            </Svg>
            <XIcon color={BLUE} />
          </div>
        </div>
        <div className="h-[7px] shrink-0 border-b border-[#0984de] bg-[#454545]" />
        <Page />
      </div>
      <div className="flex w-[17px] shrink-0 flex-col bg-white">
        <div className="flex h-6 shrink-0 items-center justify-center bg-[#696969]">
          <Svg w={12} h={8}>
            <path d="M1 1H7L11 4 7 7H1Z" fill="#e0202a" />
          </Svg>
        </div>
        <div className="h-1 shrink-0 bg-[#222]" />
        <div className="ml-px flex w-[15px] flex-1 flex-col items-center bg-[#f0f0f0] pt-1 pb-1">
          <Chevron d={UP} />
          <div className="mt-[3px] min-h-[158px] w-full bg-[#cdcdcd]" />
          <div className="flex-1" />
          <Chevron d={DOWN} />
        </div>
      </div>
    </div>
    <div className="flex h-[15px] shrink-0">
      <div className="flex flex-1 items-center bg-[#f0f0f0]">
        <div className="flex w-[30px] pl-[3px]"><Chevron d={LEFT} /></div>
        <div className="h-full flex-1 bg-[#cdcdcd]" />
        <div className="flex w-[49px] justify-end pr-1"><Chevron d={RIGHT} /></div>
      </div>
      <div className="flex w-[17px] items-center justify-center bg-[#222]">
        <Svg w={14} h={15}>
          <path d="M1 1H8L12 5V15H1Z" fill="#fff" />
          <path d="M8 1V5H12" stroke="#222" />
          <path d="M10 9V15M7 12H13" stroke="#7fc12f" strokeWidth="2.500" />
        </Svg>
      </div>
    </div>
    <NavBar />
  </section>
);

/* ---- right tool strip ---- */

const TOOLS_TOP: { label: string; icon: React.ReactNode }[] = [
  { label: "Text box", icon: <path d="M4 17 10 3 16 17M6 12.500H14" stroke={BLUE} strokeWidth="2.400" /> },
  {
    label: "Typewriter",
    icon: (
      <>
        <path d="M5 1H15V8H5Z" fill="#fff" />
        <path d="M3 8H17V11H3Z" fill="#222" stroke="#555" />
        <path d="M3 11H17L19 18H1Z" fill="#9cc5ea" stroke="#4777a8" />
        <path d="M4 13H16M3 16H17" stroke="#3d6ea0" strokeDasharray="1.500 1.500" />
      </>
    ),
  },
  {
    label: "Note",
    icon: (
      <>
        <path d="M3 1 18 3 17 18 5 17 1 12Z" fill="#f7ec56" stroke="#5c561a" />
        <path d="M5 6 8 8 10 6 14 9M5 17 6 12 1 12" stroke="#333" />
      </>
    ),
  },
  {
    label: "Link flag",
    icon: (
      <>
        <path d="M1 3H13L19 8 16 14H1Z" fill="#d61f26" />
        <ellipse cx="11" cy="10" rx="4" ry="2.200" transform="rotate(45 11 10)" stroke="#9ccc3c" strokeWidth="1.500" />
        <ellipse cx="15" cy="14" rx="4" ry="2.200" transform="rotate(45 15 14)" stroke="#9ccc3c" strokeWidth="1.500" />
      </>
    ),
  },
  {
    label: "Pen",
    icon: (
      <>
        <path d="M3 18 5 12 16 1 19 4 9 14Z" fill="#0a5ea8" />
        <path d="M1 19 4 14 6 16Z" fill="#b8c4ce" />
        <path d="M15 2 18 5" stroke="#7db8e8" strokeWidth="1.500" />
      </>
    ),
  },
  {
    label: "Highlighter",
    icon: (
      <>
        <path d="M3 16 4 12 15 1C18 0 20 2 18 5L8 15Z" fill="#fdf01a" />
        <path d="M1 19 3 14 6 16Z" fill="#d9892b" />
      </>
    ),
  },
  {
    label: "Eraser",
    icon: (
      <>
        <path d="M1 12 8 5 19 7 12 14Z" fill="#d77a88" />
        <path d="M1 12 12 14 19 7V11L12 18 1 15Z" fill="#9d4a5a" />
      </>
    ),
  },
];

const TOOLS_BOTTOM: { label: string; icon: React.ReactNode }[] = [
  { label: "Line", icon: <path d="M1 19 19 1" stroke={BLUE} strokeWidth="2" /> },
  {
    label: "Arrow",
    icon: (
      <>
        <path d="M2 18 14 6" stroke={BLUE} strokeWidth="2" />
        <path d="M19 1 17 10 10 4Z" fill={BLUE} />
      </>
    ),
  },
  { label: "Arc", icon: <path d="M1 19C1 8 8 1 19 2" stroke={BLUE} strokeWidth="2" /> },
  { label: "Polyline", icon: <path d="M13 19 18 14 16 2 2 4 5 16 13 9" stroke={BLUE} strokeWidth="2" /> },
  {
    label: "Shapes",
    icon: (
      <>
        <path d="M2 1 11 3 9 11 1 9Z" fill="#fff" stroke={BLUE} strokeWidth="0.800" />
        <path d="M12 8 18 9 16 14" stroke={BLUE} strokeWidth="1.300" />
        <path d="M13 14 19 15 15 20Z" fill="#fff" stroke={BLUE} />
      </>
    ),
  },
  {
    label: "Dimension",
    icon: (
      <>
        <path d="M3 17 17 3M1 14 6 19M14 1 19 6" stroke={BLUE} strokeWidth="1.600" />
        <path d="M4 16 5 10 10 15ZM16 4 10 5 15 10Z" fill={BLUE} />
      </>
    ),
  },
  { label: "Rectangle", icon: <path d="M1 4 17 2 19 16 3 18Z" fill="#fff" stroke={BLUE} /> },
  { label: "Ellipse", icon: <circle cx="10" cy="10" r="9" fill="#fff" stroke={BLUE} /> },
  { label: "Polygon", icon: <path d="M3 2 15 3 12 9 19 14 16 19 1 16Z" fill="#fff" stroke={BLUE} /> },
];

const ToolStrip = () => (
  <aside className="flex w-[26px] shrink-0 flex-col items-start bg-[#222]">
    <div className="flex h-[10px] items-center pl-1"><HGrip /></div>
    {TOOLS_TOP.map((t) => (
      <Slot key={t.label} label={t.label} className="min-h-[27px]"><Svg>{t.icon}</Svg></Slot>
    ))}
    <div className="flex h-[10px] items-center pl-1"><HGrip /></div>
    {TOOLS_BOTTOM.map((t) => (
      <Slot key={t.label} label={t.label} className="min-h-[27px]"><Svg>{t.icon}</Svg></Slot>
    ))}
    <div className="flex-1" />
    <div className="flex h-[11px] w-full items-center justify-end bg-[#3d3d3d] pr-1">
      <Svg w={8} h={7}>
        <path d="M1 0V7M3 0V7L7 3.500Z" stroke="#fff" fill="#fff" strokeWidth="0.800" />
      </Svg>
    </div>
  </aside>
);

const StatusBar = () => (
  <footer className="flex h-[25px] shrink-0 items-center bg-[#222] pl-1 text-[12px] text-white">
    <span>Select region to copy text</span>
    <div className="flex-1" />
    <div className="flex w-[258px] items-center justify-between">
      {["Grid", "Snap", "Content", "Markup", "Reuse", "Sync"].map((s) => (
        <button key={s} type="button">{s}</button>
      ))}
      <Caret />
    </div>
    <span className="w-[172px] pl-[34px]">8.50 x 11.00 in</span>
    <span className="w-[97px]">(0.40, -0.03)</span>
    <div className="flex w-[13px] self-end pb-1">
      <Svg w={12} h={12}>
        {["8 0", "8 4", "4 4", "8 8", "4 8", "0 8"].map((p) => (
          <path key={p} d={`M${p}h2v2h-2z`} fill="#ddd" />
        ))}
      </Svg>
    </div>
  </footer>
);

export default function App() {
  return (
    <div className="flex h-screen min-h-[560px] min-w-[900px] bg-white pt-3 pr-5 pb-5 pl-3 font-['Lato','Open_Sans',sans-serif] select-none">
      <Defs />
      <div className="flex min-w-0 flex-1 flex-col border-3 border-[#0984de] shadow-[4px_5px_14px_rgba(0,0,0,0.7)]">
        <MenuBar />
        <header className="h-[124px] shrink-0 bg-linear-to-b from-[#434343] to-[#222] font-['Roboto',sans-serif]">
          <RibbonRow />
          <EditRow />
          <AlignRow />
        </header>
        <div className="flex min-h-0 flex-1">
          <main className="flex min-w-0 flex-1 flex-col bg-[#222] pt-[6px]">
            <div className="relative flex min-h-0 flex-1 font-['Roboto',sans-serif]">
              <LeftPanel />
              <div className="w-[7px] shrink-0 bg-[#696969]" />
              <Center />
              <div className="w-[7px] shrink-0 bg-[#696969]" />
              <Handle className="top-[223px] left-[183px] h-7 w-[14px] rounded-r-full" dot="top-[11px] left-1" />
              <Handle className="top-[223px] right-0 h-7 w-[14px] rounded-l-full" dot="top-[11px] left-1" />
            </div>
            <div className="relative flex h-[7px] shrink-0 items-center justify-between bg-[#696969] px-[7px]">
              <Svg w={4} h={7}><path d="M0 0 4 3.500 0 7Z" fill="#fff" /></Svg>
              <Svg w={4} h={7} className="mr-[6px]"><path d="M0 0 4 3.500 0 7Z" fill="#fff" /></Svg>
              <Handle className="right-[331px] bottom-0 h-[14px] w-7 rounded-t-full" dot="top-1 left-[11px]" />
            </div>
          </main>
          <ToolStrip />
        </div>
        <StatusBar />
      </div>
    </div>
  );
}
